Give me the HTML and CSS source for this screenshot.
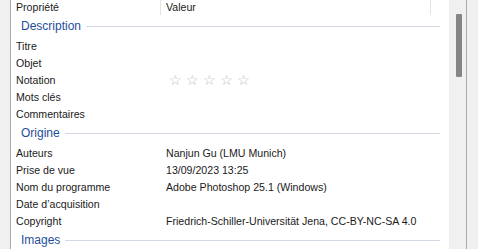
FILE: index.html
```html
<!DOCTYPE html>
<html lang="fr">
<head>
    <meta charset="UTF-8">
    <title>Propriétés</title>
    <link rel="stylesheet" href="styles.css">
</head>
<body>
    <div class="gutter gutter-left"></div>

    <div class="panel">
        <div class="list-head">
            <div class="col-name">Propriété</div>
            <div class="col-value">Valeur</div>
        </div>

        <div class="group"><span>Description</span></div>
        <div class="row"><div class="col-name">Titre</div><div class="col-value"></div></div>
        <div class="row"><div class="col-name">Objet</div><div class="col-value"></div></div>
        <div class="row">
            <div class="col-name">Notation</div>
            <div class="col-value stars">☆☆☆☆☆</div>
        </div>
        <div class="row"><div class="col-name">Mots clés</div><div class="col-value"></div></div>
        <div class="row"><div class="col-name">Commentaires</div><div class="col-value"></div></div>

        <div class="group"><span>Origine</span></div>
        <div class="row"><div class="col-name">Auteurs</div><div class="col-value">Nanjun Gu (LMU Munich)</div></div>
        <div class="row"><div class="col-name">Prise de vue</div><div class="col-value">13/09/2023 13:25</div></div>
        <div class="row"><div class="col-name">Nom du programme</div><div class="col-value">Adobe Photoshop 25.1 (Windows)</div></div>
        <div class="row"><div class="col-name">Date d’acquisition</div><div class="col-value"></div></div>
        <div class="row"><div class="col-name">Copyright</div><div class="col-value">Friedrich-Schiller-Universität Jena, CC-BY-NC-SA 4.0</div></div>

        <div class="group"><span>Images</span></div>
    </div>

    <div class="scrollbar"><div class="thumb"></div></div>
    <div class="gutter gutter-right"></div>
</body>
</html>
```

FILE: styles.css
```css
html, body {
    height: 100%;
}

body {
    margin: 0;
    display: flex;
    overflow: hidden;
    background: #f0f0f0;
    font-family: 'Liberation Sans', Arial, sans-serif;
    font-size: 10.6px;
    color: #1a1a1a;
}

.gutter {
    background: #f0f0f0;
}

.gutter-left {
    width: 10px;
    border-right: 1px solid #a9a9a9;
}

.gutter-right {
    width: 11px;
    border-left: 1px solid #a9a9a9;
}

.panel {
    flex: 1;
    background: #fff;
    overflow: hidden;
}

.list-head,
.row {
    display: flex;
    height: 17px;
    align-items: center;
}

.list-head {
    height: 15px;
    align-items: stretch;
}

.col-name {
    width: 150px;
    padding-left: 5px;
    box-sizing: border-box;
    flex-shrink: 0;
}

.col-value {
    padding-left: 5px;
    white-space: nowrap;
}

.list-head .col-name,
.list-head .col-value {
    display: flex;
    align-items: center;
    padding-bottom: 1px;
    border-right: 1px solid #e5e5e5;
}

.list-head .col-value {
    width: 264px;
}

.group {
    display: flex;
    align-items: center;
    height: 22px;
    padding-left: 10px;
    padding-right: 9px;
    color: #1e4e9a;
    font-size: 12px;
}

.group::after {
    content: "";
    flex: 1;
    height: 1px;
    margin-left: 5px;
    background: #d3d9e8;
}

.stars {
    padding-left: 8px;
    color: #bdbdbd;
    font-size: 14px;
    letter-spacing: 4.5px;
    font-family: 'DejaVu Sans', sans-serif;
}

.scrollbar {
    width: 17px;
    background: #f0f0f0;
    display: flex;
    justify-content: center;
}

.thumb {
    width: 6px;
    height: 63px;
    margin-top: 14px;
    margin-left: 3px;
    border-radius: 1px;
    background: #858585;
}
```
